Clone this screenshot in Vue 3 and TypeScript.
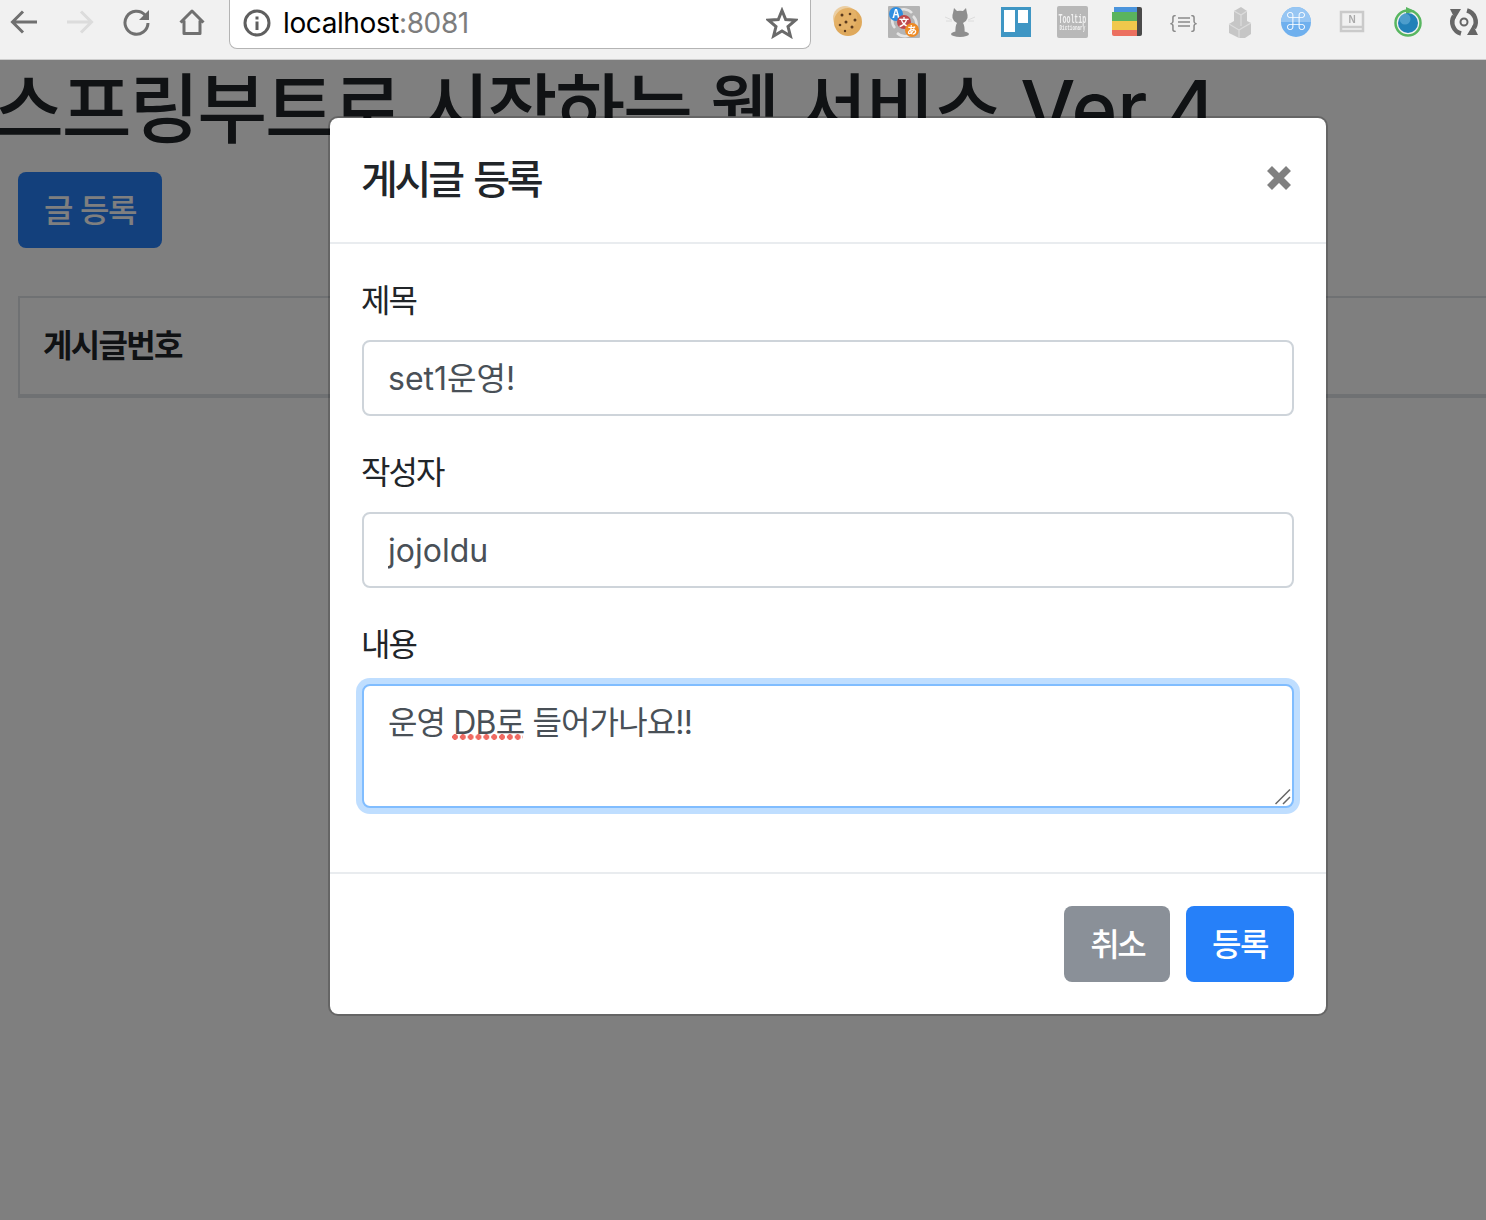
<script setup lang="ts">
const title = '게시글 등록'
</script>

<template>
  <div class="page">
    <header class="toolbar">
      <svg class="nav first" viewBox="0 0 28 28"><path d="M27 14H3M13 3.500 2.500 14 13 24.500" fill="none" stroke="#707070" stroke-width="3"/></svg>
      <svg class="nav" viewBox="0 0 28 28"><path d="M1 14H25M15 3.500 25.500 14 15 24.500" fill="none" stroke="#dcdcdc" stroke-width="3"/></svg>
      <svg class="nav" viewBox="0 0 28 28"><path d="M23 7A11.500 11.500 0 1 0 26 15" fill="none" stroke="#707070" stroke-width="3"/><path d="M27 2V12H17Z" fill="#707070"/></svg>
      <svg class="nav" viewBox="0 0 28 28"><path d="M2.500 14.500 14 3 25.500 14.500M6 12.500V25.500H22V12.500" fill="none" stroke="#707070" stroke-width="3" stroke-linejoin="round"/></svg>
      <div class="url">
        <svg class="info" viewBox="0 0 28 28"><circle cx="14" cy="14" r="12" fill="none" stroke="#5f5f5f" stroke-width="3"/><path d="M12.500 7.500h3v3h-3zM12.500 12.500h3v8.500h-3z" fill="#5f5f5f"/></svg>
        <span class="host">localhost<span class="port">:8081</span></span>
        <svg class="star" viewBox="0 0 32 32"><path d="M16 3.500 19.700 12.500 29.500 13.200 22 19.500 24.400 29 16 23.900 7.600 29 10 19.500 2.500 13.200 12.300 12.500Z" fill="none" stroke="#6a6a6a" stroke-width="3"/></svg>
      </div>
      <div class="exts">
        <svg class="ext" viewBox="0 0 32 32"><circle cx="16" cy="16" r="14" fill="#dfa95c"/><circle cx="13" cy="12" r="12" fill="#e8b86e" opacity=".6"/><g fill="#5b3a1e"><circle cx="10" cy="9" r="1.500"/><circle cx="18" cy="8" r="1.300"/><circle cx="23" cy="14" r="1.500"/><circle cx="14" cy="16" r="1.500"/><circle cx="8" cy="19" r="1.300"/><circle cx="20" cy="21" r="1.500"/><circle cx="13" cy="25" r="1.200"/></g></svg>
        <svg class="ext" viewBox="0 0 32 32"><rect width="32" height="32" rx="1" fill="#b4b4b4"/><path d="M7 22A11 11 0 0 1 24 7M25 10A11 11 0 0 1 9 27" fill="none" stroke="#e4e4e4" stroke-width="2.500"/><circle cx="8" cy="8" r="7" fill="#2f8ee0"/><text x="8" y="12" class="svgt" font-size="11" text-anchor="middle" fill="#fff">A</text><circle cx="16" cy="16" r="7" fill="#c0484a"/><text x="16" y="20" class="svgt" font-size="10" text-anchor="middle" fill="#fff">文</text><circle cx="24" cy="24" r="7" fill="#ee8a24"/><text x="24" y="28" class="svgt" font-size="10" text-anchor="middle" fill="#fff">あ</text></svg>
        <svg class="ext" viewBox="0 0 32 32"><g fill="#8e8e8e"><path d="M10 2 13 5Q16 4.300 19 5L22 2 23 7Q24 9 23.500 12A7.500 7.500 0 0 1 19 17Q21 20 20.500 27H11.500Q11 20 13 17A7.500 7.500 0 0 1 8.500 12Q8 9 9 7Z"/><ellipse cx="16" cy="28" rx="9" ry="3"/></g><path d="M1 11 8 14M31 11 24 14M2 15 8 15M30 15 24 15" stroke="#dcdcdc" stroke-width="1"/></svg>
        <svg class="ext" viewBox="0 0 32 32"><rect x="1" y="1" width="30" height="30" fill="#3f96c4"/><rect x="4" y="4" width="11" height="22" fill="#fff"/><rect x="18" y="4" width="10" height="13" fill="#fff"/></svg>
        <svg class="ext" viewBox="0 0 32 32"><rect x="1" width="31" height="32" rx="2" fill="#b8b8b8"/><text transform="translate(2.500 17) scale(1 1.900)" class="mono" font-size="6.600" font-weight="700" fill="#f1f1f1">Tooltip</text><text transform="translate(3.500 24) scale(1 1.700)" class="mono" font-size="4.300" font-weight="700" fill="#f1f1f1">Dictionary</text></svg>
        <svg class="ext" viewBox="0 0 32 32"><path d="M2 1H26V7H2Z" fill="#4a94dc"/><rect y="6" width="26" height="10" fill="#5ab45e"/><rect y="15" width="26" height="9" fill="#f0c84c"/><path d="M0 24H26V30H2Q0 30 0 28Z" fill="#ec7060"/><path d="M25 1H28Q30 1 30 3V28Q30 30 28 30H25Z" fill="#4a4a4a"/></svg>
        <svg class="ext" viewBox="0 0 32 32"><text x="2" y="22" class="svgb" font-size="18" fill="#8a8a8a">{</text><text x="23" y="22" class="svgb" font-size="18" fill="#8a8a8a">}</text><path d="M10 12H22M10 16H22M10 20H22" stroke="#8a8a8a" stroke-width="1.500"/></svg>
        <svg class="ext" viewBox="0 0 32 32"><path d="M10 5 17 1 23 5V15L27 17V28L21 32H15L5 27V18L10 15Z" fill="#c6c6c6"/><path d="M10 5 17 9 23 5M17 9V20M5 18 15 24V32M15 24 20 21M20 21 27 17" fill="none" stroke="#dcdcdc" stroke-width="1.200"/></svg>
        <svg class="ext" viewBox="0 0 32 32"><circle cx="16" cy="16" r="15" fill="#6fb0ee"/><path d="M1 16A15 15 0 0 1 31 16Z" fill="#97c6f3"/><text x="16" y="23" class="svgt" font-size="20" text-anchor="middle" fill="#fff">⌘</text></svg>
        <svg class="ext" viewBox="0 0 32 32"><rect x="5" y="6" width="22" height="19" fill="#f1f1f1" stroke="#cacaca" stroke-width="2.500"/><path d="M5 21H27" stroke="#cacaca" stroke-width="2.500"/><text x="16" y="17" class="svgb" font-size="10" font-weight="700" text-anchor="middle" fill="#aaa">N</text></svg>
        <svg class="ext" viewBox="0 0 32 32"><circle cx="16" cy="17" r="12.500" fill="none" stroke="#58b660" stroke-width="2.500"/><path d="M14 1 23 5 14 8Z" fill="#58b660"/><circle cx="16" cy="17" r="10" fill="#2280b8"/><circle cx="13" cy="13" r="5.500" fill="#6ab0d8" opacity=".6"/></svg>
        <svg class="ext" viewBox="0 0 32 32"><path d="M13 27.500A11.800 11.800 0 0 1 6 10M19 4.500A11.800 11.800 0 0 1 26 22" fill="none" stroke="#666" stroke-width="4.500"/><path d="M2 3H13L7 13ZM30 29H19L25 19Z" fill="#666"/><circle cx="16" cy="16" r="3.500" fill="none" stroke="#666" stroke-width="2"/></svg>
      </div>
    </header>

    <main class="content">
      <h1 class="headline">스프링부트로 시작하는 웹 서비스 <span class="ver">Ver.4</span></h1>
      <button class="btn primary wide" type="button">글 등록</button>
      <table class="posts">
        <thead>
          <tr><th>게시글번호</th><th>제목</th><th>작성자</th><th>최종수정일</th></tr>
        </thead>
      </table>
    </main>

    <div class="backdrop"></div>

    <section class="modal">
      <div class="modal-header">
        <h5>{{ title }}</h5>
        <button class="close" type="button" aria-label="Close">
          <svg viewBox="0 0 26 26"><path d="M3.500 3.500 22.500 22.500M22.500 3.500 3.500 22.500" stroke="#808080" stroke-width="7"/></svg>
        </button>
      </div>
      <div class="modal-body">
        <div class="group">
          <label>제목</label>
          <input class="control lift" type="text" value="set1운영!" />
        </div>
        <div class="group">
          <label>작성자</label>
          <input class="control" type="text" value="jojoldu" />
        </div>
        <div class="group">
          <label>내용</label>
          <div class="area-wrap">
            <textarea class="control area" spellcheck="false">운영 DB로 들어가나요!!</textarea>
            <span class="squiggle"></span>
            <svg class="grip" viewBox="0 0 16 16"><path d="M0.500 15 15 0.500M8 15 15 8" fill="none" stroke="#666" stroke-width="1.500"/></svg>
          </div>
        </div>
      </div>
      <div class="modal-footer">
        <button class="btn secondary" type="button">취소</button>
        <button class="btn primary" type="button">등록</button>
      </div>
    </section>
  </div>
</template>

<style>
html, body { margin: 0; background: #fff; overflow: hidden; }
</style>

<style scoped>
.page {
  position: relative;
  width: 1486px;
  height: 1220px;
  overflow: hidden;
  background: #fff;
  color: #212529;
  font-family: "Inter", "Noto Sans CJK KR", sans-serif;
  font-size: 32px;
}
.toolbar {
  position: relative;
  z-index: 3;
  display: flex;
  align-items: flex-start;
  box-sizing: border-box;
  height: 60px;
  background: #f1f1f1;
  border-bottom: 1px solid #cdcdcd;
}
.nav { width: 28px; height: 28px; margin: 8px 28px 0 0; flex: none; }
.nav.first { margin-left: 10px; }
.url {
  display: flex;
  align-items: center;
  box-sizing: border-box;
  width: 582px;
  height: 49px;
  margin: 0 0 0 -5px;
  padding: 0 12px 3px 13px;
  background: #fff;
  border: 1px solid #b4b4b4;
  border-top: 0;
  border-radius: 0 0 8px 8px;
}
.info { width: 28px; height: 28px; flex: none; }
.host { margin-left: 12px; font-size: 28px; letter-spacing: -.4px; color: #000; flex: 1; white-space: nowrap; }
.port { color: #7d7d7d; }
.star { width: 32px; height: 32px; flex: none; }
.exts { display: flex; gap: 24px; margin: 6px 0 0 21px; flex: none; }
.ext { width: 32px; height: 32px; flex: none; filter: blur(.4px); }
.svgt { font-family: "Noto Sans CJK KR", "Noto Sans CJK JP", sans-serif; font-weight: 700; }
.svgb { font-family: "Liberation Sans", sans-serif; }
.mono { font-family: "Liberation Mono", monospace; }

.content { padding: 0 0 0 18px; }
.headline {
  margin: 0 0 16px -24px;
  padding-top: 2px;
  height: 94px;
  font-size: 76px;
  font-weight: 500;
  line-height: 94px;
  letter-spacing: -2.200px;
  word-spacing: 1.500px;
  white-space: nowrap;
}
.ver { font-size: 78px; letter-spacing: 0; }
.btn {
  display: block;
  box-sizing: border-box;
  height: 76px;
  padding: 2px 24px 0;
  border: 2px solid transparent;
  border-radius: 8px;
  font: inherit;
  font-weight: 500;
  letter-spacing: -1.500px;
  line-height: 48px;
  color: #fff;
}
.primary { background: #2680f9; }
.wide { word-spacing: 1px; }
.secondary { background: #8a9098; letter-spacing: -2.500px; }
.posts {
  width: 1600px;
  margin-top: 48px;
  border: 2px solid #dee2e6;
  border-collapse: collapse;
}
.posts th {
  height: 90px;
  padding: 0 24px 6px 23px;
  border-bottom: 4px solid #dee2e6;
  text-align: left;
  font-weight: 700;
  letter-spacing: -1.700px;
}
.backdrop {
  position: absolute;
  inset: 60px 0 0;
  z-index: 1;
  background: rgba(0, 0, 0, .5);
}
.modal {
  position: absolute;
  z-index: 2;
  top: 116px;
  left: 328px;
  box-sizing: border-box;
  width: 1000px;
  background: #fff;
  background-clip: padding-box;
  border: 2px solid rgba(0, 0, 0, .2);
  border-radius: 10px;
}
.modal-header {
  display: flex;
  justify-content: space-between;
  align-items: center;
  padding: 32px 32px 32px 31px;
  border-bottom: 2px solid #e9ecef;
}
.modal-header h5 { margin: 0; font-size: 40px; font-weight: 500; line-height: 60px; letter-spacing: -3.200px; word-spacing: 4px; }
.close { width: 26px; height: 26px; padding: 0; margin: -4px 2px 0 0; border: 0; background: none; }
.close svg { display: block; width: 26px; height: 26px; }
.modal-body { padding: 32px; }
.group { margin-bottom: 32px; }
label { display: block; margin: 0 0 14px -1px; line-height: 50px; letter-spacing: -2px; }
.control {
  display: block;
  box-sizing: border-box;
  width: 100%;
  height: 76px;
  padding: 12px 24px;
  border: 2px solid #ced4da;
  border-radius: 8px;
  outline: 0;
  background: #fff;
  font: inherit;
  line-height: 48px;
  color: #495057;
}
.lift { padding-top: 10px; padding-bottom: 14px; }
.area-wrap { position: relative; }
.area {
  height: 124px;
  padding-top: 13px;
  padding-bottom: 11px;
  border-color: #80bdff;
  box-shadow: 0 0 0 6px rgba(0, 123, 255, .25);
  letter-spacing: -.85px;
  resize: none;
}
.squiggle {
  position: absolute;
  left: 89px;
  top: 50px;
  width: 72px;
  height: 6px;
  background: radial-gradient(circle at 4px 3px, #ef6a62 2.600px, transparent 3.100px) 0 0 / 7.850px 6px repeat-x;
}
.grip {
  position: absolute;
  right: 3px;
  bottom: 3px;
  width: 16px;
  height: 16px;
  pointer-events: none;
}
.modal-footer {
  display: flex;
  justify-content: flex-end;
  gap: 16px;
  padding: 32px;
  border-top: 2px solid #e9ecef;
}
</style>
